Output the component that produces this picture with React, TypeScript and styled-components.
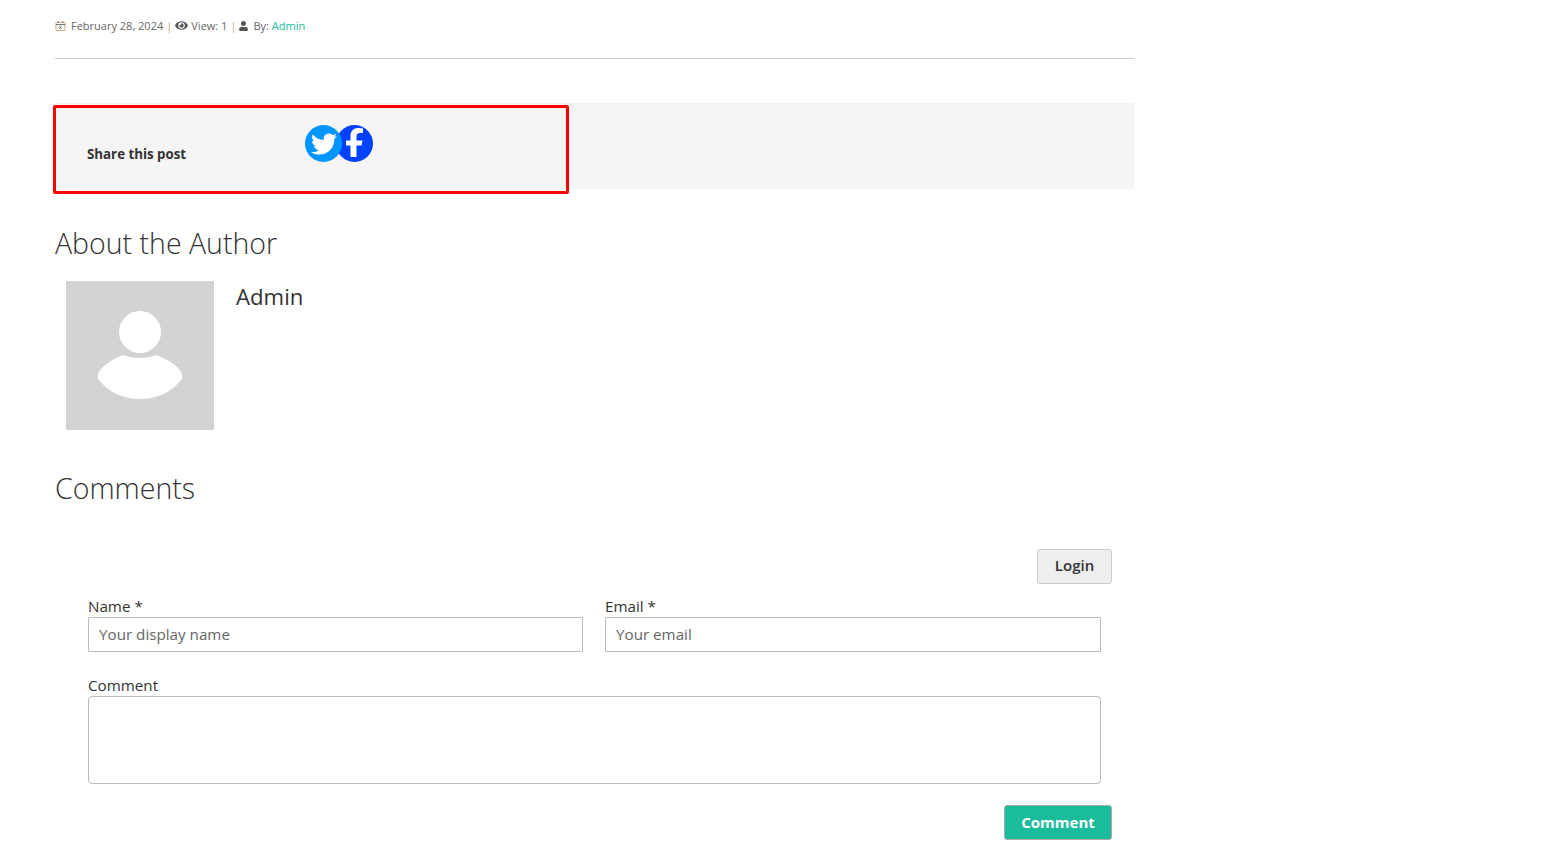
import React from "react";
import styled, { createGlobalStyle } from "styled-components";
import { FaEye, FaUser, FaTwitter } from "react-icons/fa";

const GlobalStyle = createGlobalStyle`
  html, body {
    margin: 0;
    padding: 0;
    background: #fff;
    font-family: "Open Sans", sans-serif;
    color: #333;
  }
  * { box-sizing: border-box; }
`;

export default function App() {
    return <Page>
        <GlobalStyle/>
        <Meta>
            <CalendarIcon viewBox="0 0 12 12">
                <rect x="1" y="2" width="10" height="9" rx="1" fill="none" stroke="#c9a27c" strokeWidth="1"/>
                <path d="M1 4.5h10" stroke="#555" strokeWidth="1"/>
                <path d="M3.5 0.8v2M8.5 0.8v2" stroke="#555" strokeWidth="1"/>
                <path d="M4.6 6.2l2.6 2.9M7.2 6.2l-2.6 2.9" stroke="#555" strokeWidth="0.9"/>
            </CalendarIcon>
            <span>February 28, 2024</span>
            <Pipe>|</Pipe>
            <EyeIcon/>
            <span>View: 1</span>
            <Pipe>|</Pipe>
            <UserIcon/>
            <span>By: <MetaLink>Admin</MetaLink></span>
        </Meta>
        <Rule/>
        <ShareBand>
            <ShareBox>
                <ShareLabel>Share this post</ShareLabel>
                <ShareIcons>
                    <TwitterDisc><FaTwitter size={26} color="#fff"/></TwitterDisc>
                    <FacebookDisc>
                        <svg width="37" height="37" viewBox="0 0 37 37">
                            <path fill="#fff" d="M14.5 32V20.5H10v-5h4.5V11c0-5 3-8 7.5-8 2 0 4 .3 5 .5V8h-3c-2.5 0-3.5 1.500-3.500 3.500v4h6l-1 5h-5V32z"/>
                        </svg>
                    </FacebookDisc>
                </ShareIcons>
            </ShareBox>
        </ShareBand>
        <AuthorHeading>About the Author</AuthorHeading>
        <AuthorRow>
            <Avatar>
                <svg width="148" height="149" viewBox="0 0 148 149">
                    <circle cx="74" cy="51" r="21" fill="#fff"/>
                    <path fill="#fff" d="M32 93c3-8 15-15 25-19 5 2 11 3 17 3s12-1 16-3c11 4 23 11 26 19v5c-10 13-25 20-42 20s-32-7-42-20z"/>
                </svg>
            </Avatar>
            <AuthorName>Admin</AuthorName>
        </AuthorRow>
        <CommentsHeading>Comments</CommentsHeading>
        <CommentForm>
            <LoginRow>
                <LoginButton>Login</LoginButton>
            </LoginRow>
            <FieldRow>
                <Field>
                    <FieldLabel>Name *</FieldLabel>
                    <TextInput placeholder="Your display name"/>
                </Field>
                <Field>
                    <FieldLabel>Email *</FieldLabel>
                    <TextInput placeholder="Your email"/>
                </Field>
            </FieldRow>
            <CommentField>
                <Label>Comment</Label>
                <TextArea/>
            </CommentField>
            <SubmitRow>
                <SubmitButton>Comment</SubmitButton>
            </SubmitRow>
        </CommentForm>
    </Page>
}

const Page = styled.div`
  width: 1079px;
  margin-left: 55px;
  padding-top: 18px;
`

const Meta = styled.div`
  display: flex;
  align-items: center;
  gap: 3px;
  height: 16px;
  font-size: 11px;
  line-height: 16px;
  color: #666;
  white-space: nowrap;
`

const CalendarIcon = styled.svg`
  width: 11px;
  height: 12px;
  margin: 0 2px 0 0;
`

const EyeIcon = styled(FaEye)`
  width: 13px;
  height: 13px;
  margin-bottom: 2px;
  color: #555;
`

const UserIcon = styled(FaUser)`
  width: 9px;
  height: 10px;
  margin-right: 2px;
  color: #555;
`

const Pipe = styled.span`
  color: #c9a27c;
`

const MetaLink = styled.a`
  color: #1abc9c;
`

const Rule = styled.div`
  height: 1px;
  margin-top: 24px;
  background: #ccc;
`

const ShareBand = styled.div`
  height: 86px;
  margin-top: 44px;
  background: #f5f5f5;
`

const ShareBox = styled.div`
  display: flex;
  align-items: flex-start;
  width: 516px;
  height: 89px;
  margin-left: -2px;
  transform: translateY(2px);
  padding: 17px 0 0 31px;
  border: 3px solid #f00;
  border-radius: 2px;
`

const ShareLabel = styled.div`
  width: 218px;
  margin-top: 19px;
  font-size: 13.3px;
  line-height: 20px;
  font-weight: 700;
  color: #333;
`

const ShareIcons = styled.div`
  display: flex;
`

const TwitterDisc = styled.div`
  position: relative;
  z-index: 1;
  display: flex;
  align-items: center;
  justify-content: center;
  width: 37px;
  height: 37px;
  border-radius: 50%;
  background: #0095ff;
`

const FacebookDisc = styled.div`
  display: flex;
  width: 37px;
  height: 37px;
  margin-left: -6px;
  border-radius: 50%;
  background: #0040ff;
`

const AuthorHeading = styled.h2`
  margin: 35px 0 0 0;
  font-size: 28.5px;
  line-height: 38px;
  font-weight: 300;
  color: #333;
`

const AuthorRow = styled.div`
  display: flex;
  gap: 22px;
  margin: 19px 0 0 11px;
`

const Avatar = styled.div`
  width: 148px;
  height: 149px;
  background: #d3d3d3;
`

const AuthorName = styled.div`
  margin-top: 1px;
  font-size: 22.2px;
  line-height: 30px;
  color: #333;
`

const CommentsHeading = styled(AuthorHeading)`
  margin-top: 39px;
`

const CommentForm = styled.form`
  display: flex;
  flex-direction: column;
  margin-top: 42px;
  padding: 0 22px 0 33px;
`

const LoginRow = styled.div`
  display: flex;
  justify-content: flex-end;
`

const LoginButton = styled.button.attrs({type: "button"})`
  width: 75px;
  height: 35px;
  padding: 0 0 3px 0;
  border: 1px solid #ccc;
  border-radius: 3px;
  background: #eee;
  font-family: inherit;
  font-size: 15px;
  font-weight: 600;
  color: #333;
`

const FieldRow = styled.div`
  display: grid;
  grid-template-columns: 495px 496px;
  gap: 22px;
  margin-top: 14px;
`

const Field = styled.div`
  display: flex;
  flex-direction: column;
`

const Label = styled.label`
  font-size: 15.2px;
  line-height: 19px;
  color: #333;
`

const FieldLabel = styled(Label)`
  line-height: 17px;
  margin-bottom: 2px;
`

const TextInput = styled.input`
  height: 35px;
  padding: 0 10px 2px 10px;
  border: 1px solid #bbb;
  border-radius: 1px;
  font-family: inherit;
  font-size: 15.2px;
  color: #333;

  &::placeholder {
    color: #666;
    opacity: 1;
  }
`

const CommentField = styled.div`
  display: flex;
  flex-direction: column;
  width: 1013px;
  margin-top: 24px;
`

const TextArea = styled.textarea`
  height: 88px;
  margin-top: 1px;
  border: 1px solid #bbb;
  border-radius: 4px;
  resize: none;
`

const SubmitRow = styled.div`
  display: flex;
  justify-content: flex-end;
  margin-top: 21px;
`

const SubmitButton = styled.button.attrs({type: "button"})`
  width: 108px;
  height: 35px;
  padding: 0 0 2px 0;
  border: 1px solid #aaa;
  border-radius: 3px;
  background: #1abc9c;
  font-family: inherit;
  font-size: 15px;
  font-weight: 700;
  color: #fff;
`
